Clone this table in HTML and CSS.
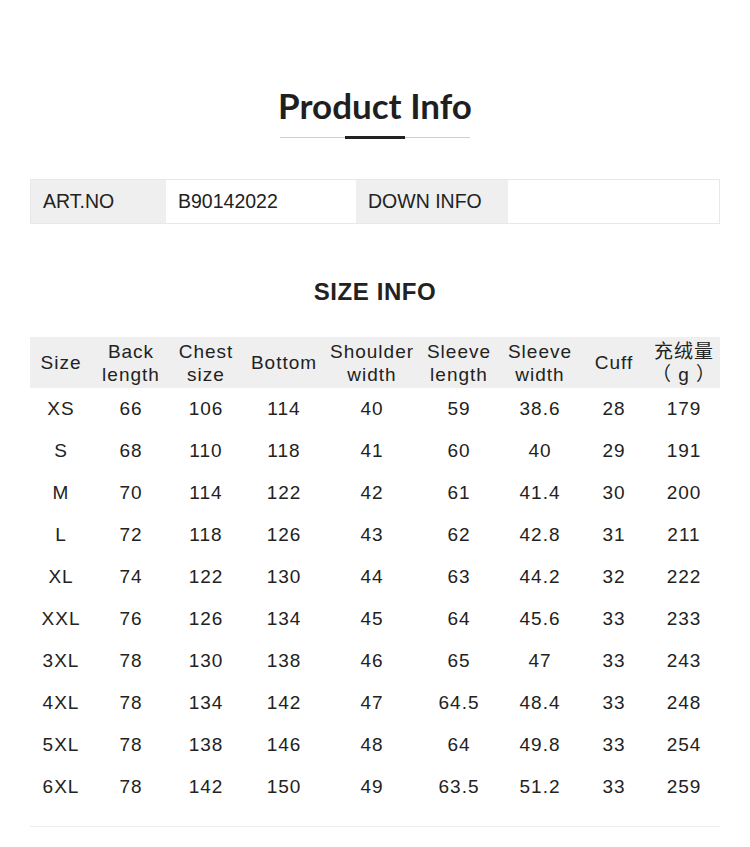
FILE: index.html
```html
<!DOCTYPE html>
<html lang="en">
<head>
<meta charset="utf-8">
<title>Product Info</title>
<link rel="stylesheet" href="styles.css">
</head>
<body>
<div class="page">
  <h1 class="title">Product Info</h1>
  <div class="divider"><span class="bar"></span></div>

  <div class="art">
    <div class="cell label">ART.NO</div>
    <div class="cell value">B90142022</div>
    <div class="cell label">DOWN INFO</div>
    <div class="cell value"></div>
  </div>

  <h2 class="subtitle">SIZE INFO</h2>

  <table class="sizes">
    <colgroup>
      <col class="c1"><col class="c2"><col class="c3"><col class="c4"><col class="c5"><col class="c6"><col class="c7"><col class="c8"><col class="c9">
    </colgroup>
    <thead>
      <tr>
        <th>Size</th><th>Back<br>length</th><th>Chest<br>size</th><th>Bottom</th><th>Shoulder<br>width</th><th>Sleeve<br>length</th><th>Sleeve<br>width</th><th>Cuff</th><th>充绒量<br>（ g ）</th>
      </tr>
    </thead>
    <tbody>
      <tr><td>XS</td><td>66</td><td>106</td><td>114</td><td>40</td><td>59</td><td>38.6</td><td>28</td><td>179</td></tr>
      <tr><td>S</td><td>68</td><td>110</td><td>118</td><td>41</td><td>60</td><td>40</td><td>29</td><td>191</td></tr>
      <tr><td>M</td><td>70</td><td>114</td><td>122</td><td>42</td><td>61</td><td>41.4</td><td>30</td><td>200</td></tr>
      <tr><td>L</td><td>72</td><td>118</td><td>126</td><td>43</td><td>62</td><td>42.8</td><td>31</td><td>211</td></tr>
      <tr><td>XL</td><td>74</td><td>122</td><td>130</td><td>44</td><td>63</td><td>44.2</td><td>32</td><td>222</td></tr>
      <tr><td>XXL</td><td>76</td><td>126</td><td>134</td><td>45</td><td>64</td><td>45.6</td><td>33</td><td>233</td></tr>
      <tr><td>3XL</td><td>78</td><td>130</td><td>138</td><td>46</td><td>65</td><td>47</td><td>33</td><td>243</td></tr>
      <tr><td>4XL</td><td>78</td><td>134</td><td>142</td><td>47</td><td>64.5</td><td>48.4</td><td>33</td><td>248</td></tr>
      <tr><td>5XL</td><td>78</td><td>138</td><td>146</td><td>48</td><td>64</td><td>49.8</td><td>33</td><td>254</td></tr>
      <tr><td>6XL</td><td>78</td><td>142</td><td>150</td><td>49</td><td>63.5</td><td>51.2</td><td>33</td><td>259</td></tr>
    </tbody>
  </table>
  <div class="endline"></div>
</div>
</body>
</html>
```

FILE: styles.css
```css
* { box-sizing: border-box; }
html, body { margin: 0; padding: 0; background: #fff; }
body {
  font-family: "Liberation Sans", Arial, "Noto Sans CJK SC", sans-serif;
  color: #222;
}
.page {
  width: 750px;
  padding: 0 30px;
}
.title {
  margin: 83px 0 0;
  font-family: Lato, "Liberation Sans", sans-serif;
  font-weight: 700;
  font-size: 35px;
  line-height: 44px;
  text-align: center;
  color: #1f1f1f;
}
.divider {
  width: 190px;
  height: 3px;
  margin: 9px auto 0;
  display: flex;
  justify-content: center;
  background: linear-gradient(#cfcfcf, #cfcfcf) center / 100% 1px no-repeat;
}
.divider .bar {
  width: 60px;
  height: 3px;
  background: #222;
}
.art {
  margin-top: 40px;
  display: grid;
  grid-template-columns: 135px 190px 152px 1fr;
  height: 45px;
  border: 1px solid #e8e8e8;
}
.art .cell {
  display: flex;
  align-items: center;
  padding-left: 12px;
  font-size: 19.5px;
  color: #222;
}
.art .label { background: #efefef; }
.art .value { background: #fff; }
.subtitle {
  margin: 53px 0 0;
  font-size: 24px;
  line-height: 30px;
  font-weight: 700;
  text-align: center;
  letter-spacing: 0.6px;
  color: #222;
}
.sizes {
  margin-top: 30px;
  width: 690px;
  border-collapse: collapse;
  table-layout: fixed;
  font-size: 19px;
  letter-spacing: 1px;
  color: #222;
}
.c1 { width: 62px; }
.c2 { width: 78px; }
.c3 { width: 72px; }
.c4 { width: 84px; }
.c5 { width: 92px; }
.c6 { width: 82px; }
.c7 { width: 80px; }
.c8 { width: 68px; }
.c9 { width: 72px; }
.sizes th {
  background: #efefef;
  font-weight: 400;
  height: 51px;
  line-height: 23px;
  padding: 0;
  text-align: center;
  white-space: nowrap;
}
.sizes td {
  height: 42px;
  padding: 0;
  text-align: center;
  line-height: 22px;
}
.endline {
  margin-top: 18px;
  height: 1px;
  background: #ececec;
}
```
